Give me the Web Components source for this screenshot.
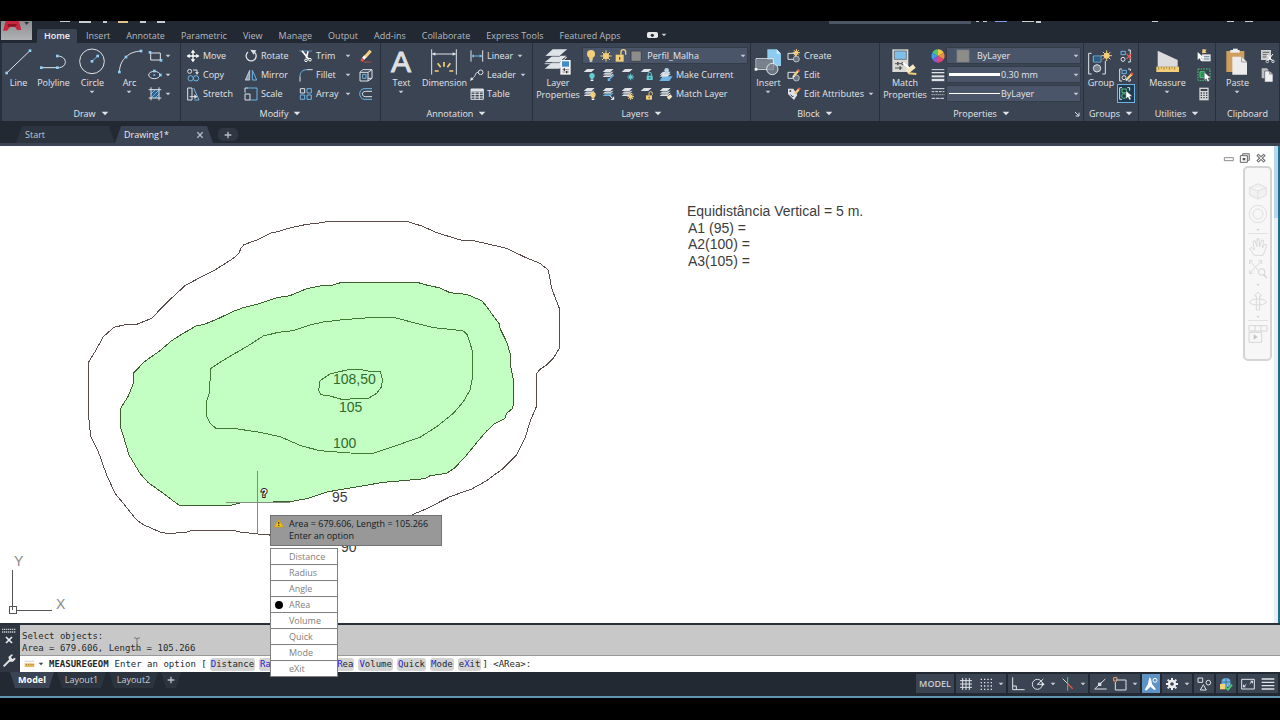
<!DOCTYPE html>
<html lang="en">
<head>
<meta charset="utf-8">
<title>Drawing1</title>
<style>
  html, body { margin: 0; height: 100%; background: #000; }
  body { font-family: "Open Sans", "Noto Sans", sans-serif; font-size: 9px; line-height: 12px; color: #e2e5e9; overflow: hidden; }
</style>
</head>
<body>
<cad-app></cad-app>
<script>
const W = '#dfe3e8', B = '#6db7e6', Y = '#f3cf7a', T = '#62cdd2', R = '#e2574c', G = '#4fc777';

/* Icon markup: three drawing units per pixel. [x, y, width, height, markup] */
const sq = (x, y) => `<path d="M${x - 4} ${y - 4}h8v8h-8z" fill="#8fd0f5"/>`;
const ln = (d, c = W, w = 3) => `<path d="${d}" fill="none" stroke="${c}" stroke-width="${w}"/>`;
const fl = (d, c = W) => `<path d="${d}" fill="${c}"/>`;
const sheet = (y, c = W) => fl(`M15 ${y}H38L28 ${y + 9}H5z`, c);
const stack = (c = W) => sheet(21, c) + sheet(14, W) + ln('M4 15L15 5H38', '#3b4453', 1) + sheet(6, W) + ln('M6 17H29L38 9M6 24H29L38 16', '#3b4453', 2);
const bulb = (x, y, c) => `<circle cx="${x}" cy="${y}" r="8" fill="${c}"/>` + fl(`M${x - 4} ${y + 7}h8v4h-8z`, c) + fl(`M${x - 4} ${y + 12}h8v4h-8z`, '#fff');
const star = (x, y, r, c = Y) => ln(`M${x - r} ${y}h${2 * r}M${x} ${y - r}v${2 * r}M${x - r * .7} ${y - r * .7}l${r * 1.4} ${r * 1.4}M${x + r * .7} ${y - r * .7}l${-r * 1.4} ${r * 1.4}`, c) + `<circle cx="${x}" cy="${y}" r="${r * .55}" fill="${c}"/>`;
const lock = (x, y, c, open) => fl(`M${x - 9} ${y}h18v13h-18z`, c) + ln(open ? `M${x} ${y}v-6a5 5 0 0 1 10 0v4` : `M${x - 5} ${y}v-5a5 5 0 0 1 10 0v5`, c) + fl(`M${x - 1} ${y + 4}h3v5h-3z`, '#3b4453');
const pencil = (x, y) => ln(`M${x} ${y}l14 -16`, Y, 7) + ln(`M${x + 12} ${y - 13}l4 -5`, R, 7) + fl(`M${x - 5} ${y + 6}l2 -8 6 5z`, '#fff');
const pointer = (x, y) => `<path d="M${x} ${y}v24l6-5 4 9 5-2-4-9h8z" fill="#fff" stroke="#26303a" stroke-width="1"/>`;
const tag = ln('M6 16H28V34H6z') + '<circle cx="31" cy="33" r="9" fill="#6a7480" stroke="#dfe3e8" stroke-width="2"/>';

const ICONS = {
  line: [12, 144, 84, 84, ln('M20 219L90 152') + sq(20, 219) + sq(90, 152)],
  polyline: [117, 144, 84, 84, ln('M124 203H178C204 200 202 168 172 168') + sq(124, 203) + sq(172, 203) + sq(172, 168)],
  circle: [235, 144, 84, 84, `<circle cx="277" cy="184" r="37" fill="none" stroke="${W}" stroke-width="3"/>` + ln('M277 184L294 168', B) + sq(277, 184) + sq(294, 168)],
  arc: [346, 144, 84, 84, ln('M359 216C360 195 368 180 379 171C392 158 405 155 424 153') + sq(359, 216) + sq(379, 171) + sq(424, 153)],
  rect: [444, 144, 48, 48, ln('M455 159H484V180H455z') + sq(453, 157) + sq(486, 181)],
  ellipse: [444, 202, 48, 48, `<ellipse cx="466" cy="226" rx="17" ry="11" fill="none" stroke="${W}" stroke-width="3"/><circle cx="466" cy="226" r="3" fill="${B}"/>` + sq(484, 226) + sq(466, 214)],
  hatch: [444, 260, 48, 48, fl('M456 272H480V296H456z', '#2d5f86') + ln('M456 284L468 272M456 296L480 272M468 296L480 284', B) + ln('M456 264V303M480 264V303M449 271H487M449 296H487')],
  move: [0, 0, 48, 48, ln('M24 8V40M8 24H40', '#fff', 4) + fl('M24 5l7 9H17zM24 43l7-9H17zM5 24l9-7v14zM43 24l-9-7v14z', '#fff')],
  copy: [0, 0, 48, 48, `<g fill="none" stroke-width="3"><circle cx="14" cy="13" r="6" stroke="${W}"/><g stroke="${B}"><circle cx="17" cy="34" r="8"/><circle cx="33" cy="34" r="8"/></g></g>` + ln('M24 9H36V18') + fl('M30 16h12l-6 7z')],
  stretch: [0, 0, 48, 48, ln('M8 6H21V42H8z') + ln('M26 6L42 42H28', B) + ln('M14 32H30') + fl('M28 25l9 7-9 7z')],
  rotate: [0, 0, 48, 48, ln('M15 12A15 15 0 1 0 36 14', W, 4) + fl('M22 5L40 7L32 20z')],
  mirror: [0, 0, 48, 48, fl('M20 8V40H6z', '#8fa0ae') + ln('M20 10V39H7z', W, 2) + ln('M28 10V39H41z', B)],
  scale: [0, 0, 48, 48, ln('M12 6H42V42H22', B) + ln('M6 24H21V42H6zM6 20V6H14')],
  trim: [0, 0, 48, 48, ln('M4 9H42', B, 2) + ln('M12 8L32 34M30 10L25 30', '#fff', 5) + '<circle cx="24" cy="37" r="4" fill="none" stroke="#fff" stroke-width="3"/><circle cx="36" cy="35" r="4" fill="none" stroke="#fff" stroke-width="3"/>'],
  fillet: [0, 0, 48, 48, ln('M26 8H44M6 28V44') + ln('M6 28C6 16 14 8 26 8', B)],
  array: [0, 0, 48, 48, ln('M7 8H20V21H7z') + ln('M27 8H40V21H27zM7 27H20V40H7zM27 27H40V40H27z', B)],
  erase: [0, 0, 48, 48, ln('M22 26L38 8', Y, 9) + ln('M15 33L22 25', '#fff', 9) + ln('M10 39L16 32', R, 9) + ln('M18 42H40', R, 2)],
  explode: [0, 0, 48, 48, ln('M6 16H30V42H6zM14 8H42V34H30M6 16L14 8M30 16L42 8M30 42L42 34') + ln('M14 22H24V34H14z', B)],
  offset: [0, 0, 48, 48, ln('M42 8H18C0 10 2 38 18 40H42', B) + ln('M42 16H22C10 17 10 31 22 32H42')],
  dimension: [355, 144, 84, 84, ln('M360 148V224M434 148V224M362 162H432') + fl('M361 162l10-5v10zM433 162l-10-5v10z') + ln('M397 186V200M378 190L387 202M416 190L407 202M369 213H381M413 213H425', Y, 5)],
  linear: [0, 0, 48, 48, ln('M6 7V41M41 7V41') + ln('M8 24H39', B) + fl('M7 24l8-5v10zM40 24l-8-5v10z', B)],
  leader: [0, 0, 48, 48, '<circle cx="35" cy="16" r="7" fill="none" stroke="#dfe3e8" stroke-width="3"/>' + ln('M28 16C16 16 24 26 8 36') + fl('M3 42l3-11 8 6z')],
  table: [0, 0, 48, 48, ln('M6 9H43V40H6zM6 18H43M6 25H43M6 33H43M18 18V40M31 18V40') + fl('M6 9H43V16H6z')],
  layerprops: [702, 144, 84, 84, fl('M728 186H770L748 206H704z') + ln('M728 172H770L748 191H704') + fl('M728 167H770L748 187H704z') + ln('M704 188H748L770 168', '#3b4453', 2) + fl('M728 148H772L749 168H706z') + ln('M705 169H749L772 149', '#3b4453', 2) + fl('M751 180H782V224H751z', '#f2f2f2') + fl('M756 184H777V200H756z', '#3f8cc9') + ln('M757 209H777M757 216H777', '#555', 2) + fl('M761 205h4v7h-4zM768 213h4v7h-4z', '#333')],
  lyoff: [0, 0, 48, 48, sheet(6) + bulb(30, 26, T)],
  lyiso: [0, 0, 48, 48, stack() + ln('M22 40L38 24M22 34V40H28', B, 4)],
  lyfrz: [0, 0, 48, 48, sheet(6) + star(32, 30, 10, T)],
  lylock: [0, 0, 48, 48, sheet(6) + lock(32, 26, T)],
  lycur: [0, 0, 48, 48, fl('M14 28H44L34 42H4z', B) + sheet(20) + sheet(14) + '<circle cx="26" cy="10" r="7" fill="#b9d7e8"/>' + fl('M16 22L26 14L38 22z', '#b9d7e8')],
  lyon: [0, 0, 48, 48, stack() + bulb(33, 26, Y)],
  lyuniso: [0, 0, 48, 48, stack(B) + ln('M26 28L38 40M38 32V40H30', '#fff', 3)],
  lythaw: [0, 0, 48, 48, stack() + star(32, 32, 10)],
  lyunlock: [0, 0, 48, 48, sheet(6) + lock(30, 28, Y, 1)],
  lymatch: [0, 0, 48, 48, stack() + ln('M24 26L32 32', W, 4) + ln('M30 38L40 28', '#f5e7b8', 9)],
  bulb: [0, 0, 48, 48, bulb(24, 18, Y).replace('r="8"', 'r="12"') + fl('M19 28h10v8h-10z', Y) + fl('M20 37h8v4h-8z', '#fff')],
  sun: [0, 0, 48, 48, star(24, 24, 17)],
  unlock: [0, 0, 48, 48, fl('M8 20H32V41H8z', Y) + ln('M24 20V12a7 7 0 0 1 14 0v8', Y, 4) + fl('M18 27h4v8h-4z', '#6b5a28')],
  swatch: [0, 0, 48, 48, fl('M9 9H40V40H9z', '#8c8c88') + ln('M9 9H40V40H9z', '#2c333d', 2)],
  bigswatch: [0, 0, 48, 48, fl('M5 5H43V43H5z', '#8c8c88') + ln('M5 5H43V43H5z', '#5f6672', 2)],
  insert: [402, 138, 84, 84, fl('M442 142H470L483 155V192H442z', '#8ecbf0') + fl('M470 142V155H483z', '#d7edfb') + ln('M408 170H460V202H408z') + fl('M410 172H458V200H410z', '#78818c') + '<circle cx="457" cy="201" r="17" fill="#7d8792" fill-opacity=".75" stroke="#dfe3e8" stroke-width="3"/>' + fl('M404 198h8v8h-8z', '#fff')],
  create: [0, 0, 48, 48, tag + star(31, 14, 11)],
  edit: [0, 0, 48, 48, tag + pencil(24, 26)],
  editattr: [0, 0, 48, 48, fl('M6 8H22L34 26L24 42L6 24z', W) + '<circle cx="13" cy="15" r="3" fill="#3b4453"/>' + ln('M14 26l6 7 8-12', '#3b4453', 3) + pencil(26, 24)],
  matchprops: [816, 144, 84, 84, fl('M820 148H868V216H820z', '#d9d9d6') + fl('M826 153H862V178H826z', '#7fc0ea') + ln('M826 153H862V178H826z', '#555', 2) + ln('M828 191H858M828 204H850', '#555', 3) + fl('M834 186h5v10h-5zM848 186h5v10h-5zM841 199h5v10h-5z', '#555') + ln('M852 188L872 206', '#fff', 6) + ln('M864 216L886 198', '#f5e9c0', 13) + ln('M868 220L892 222', Y, 6)],
  wheel: [0, 0, 48, 48, fl('M24 24V4A20 20 0 0 1 41 14z', '#f4c542') + fl('M24 24L41 14A20 20 0 0 1 41 34z', '#f58b3c') + fl('M24 24L41 34A20 20 0 0 1 24 44z', '#e2476d') + fl('M24 24V44A20 20 0 0 1 7 34z', '#8c56d9') + fl('M24 24L7 34A20 20 0 0 1 7 14z', '#3f9be6') + fl('M24 24L7 14A20 20 0 0 1 24 4z', '#4fc777')],
  lweight: [0, 0, 48, 48, ln('M5 8H43') + ln('M5 17H43', W, 4) + ln('M5 28H43', W, 6) + ln('M5 39H43', W, 7)],
  ltype: [0, 0, 48, 48, ln('M5 8H43') + '<g stroke-dasharray="8 3">' + ln('M5 17H43') + '</g><g stroke-dasharray="3 3">' + ln('M5 26H43') + '</g><g stroke-dasharray="11 2">' + ln('M5 37H43') + '</g>'],
  launcher: [0, 0, 24, 24, ln('M6 6L17 17M18 8V18H8', W, 3)],
  group: [438, 144, 84, 84, ln('M452 160H443V222H452M484 222H493V182') + ln('M457 168H480V186H457z', B) + fl('M459 170H478V184H459z', '#2d5f86') + '<circle cx="468" cy="205" r="11" fill="#78818c" stroke="#dfe3e8" stroke-width="3"/>' + star(497, 167, 16)],
  ungroup: [0, 0, 48, 48, ln('M9 10H22V20H9z', B) + '<circle cx="15" cy="34" r="6" fill="none" stroke="#dfe3e8" stroke-width="3"/>' + ln('M30 6H37V42H30') + ln('M26 18l14 14M40 18L26 32', R, 4)],
  groupedit: [0, 0, 48, 48, ln('M12 6H5V42H12M30 42H37V36M30 6H37V12') + ln('M12 10H25V20H12z', B) + '<circle cx="18" cy="32" r="6" fill="none" stroke="#dfe3e8" stroke-width="3"/>' + pencil(28, 36)],
  groupsel: [0, 0, 48, 48, ln('M12 5H5V40H12M28 5H35V14') + ln('M12 9H25V20H12z', G) + '<circle cx="18" cy="30" r="7" fill="none" stroke="#4fc777" stroke-width="3"/>' + pointer(24, 14)],
  measure: [638, 144, 84, 84, fl('M652 152L712 180V200H652z', '#dcdcdc') + fl('M648 200H716V216H648z', Y) + ln('M655 201v8M663 201v5M671 201v8M679 201v5M687 201v8M695 201v5M703 201v8', '#7a5f1c', 2)],
  qselect: [0, 0, 48, 48, fl('M18 19H44V40H18z', '#e5e5e5') + ln('M24 26H40M24 33H40', '#6783a0', 3) + fl('M20 3l12 2-4 5 4 4-14 2z', Y) + pointer(5, 12).replace('stroke-width="1"', 'stroke-width="0"')],
  selall: [0, 0, 48, 48, '<g stroke-dasharray="5 3">' + ln('M6 6H42V40H6z', G) + '</g>' + fl('M12 14H26V32H12z', '#2f8d55') + ln('M12 14H26V32H12z', G) + pointer(25, 16)],
  calc: [0, 0, 48, 48, fl('M10 5H38V43H10z', '#d6d6d6') + fl('M14 9H34V15H14z', '#3b4453') + '<g stroke-dasharray="4 4">' + ln('M14 21H34M14 28H34M14 35H34', '#3b4453', 4) + '</g>'],
  paste: [852, 144, 84, 84, fl('M862 153H916V216H862z', '#cf9f5d') + fl('M874 150H902V158H874z', '#eee') + fl('M882 146H896V152H882z', '#eee') + fl('M880 170H908L924 186V224H880z', '#ececec') + ln('M908 170V186H924', '#777', 2)],
  cut: [0, 0, 48, 48, fl('M6 6H36V36H6z', '#cfcfcf') + ln('M11 13H31M11 20H26M11 27H22', '#59616c') + ln('M24 20L42 40M42 18L26 38', '#fff', 3) + '<circle cx="25" cy="40" r="4" fill="none" stroke="#fff" stroke-width="2"/><circle cx="42" cy="40" r="4" fill="none" stroke="#fff" stroke-width="2"/>'],
  copyclip: [0, 0, 48, 48, fl('M8 4H24L28 8V34H8z', '#bfbfbf') + fl('M17 12H32L41 21V44H17z', '#f0f0f0') + ln('M17 44V12H32L41 21M32 12V21H41', '#4a525e', 2)],
  grid: [0, 0, 48, 48, ln('M14 6V42M24 6V42M34 6V42M6 14H42M6 24H42M6 34H42')],
  snap: [0, 0, 48, 48, '<g stroke-dasharray="4 6">' + ln('M8 10H42M8 20H42M8 30H42M8 40H42', W, 4) + '</g>'],
  ortho: [0, 0, 48, 48, ln('M8 4V41H44M8 30H19V41', W, 3)],
  polar: [0, 0, 48, 48, '<circle cx="22" cy="25" r="15" fill="none" stroke="#dfe3e8" stroke-width="3"/>' + ln('M22 25L40 9M22 25H42') + fl('M36 18l8 7-8 6z')],
  iso: [0, 0, 48, 48, ln('M23 3V44', G) + ln('M8 8L22 22', '#cfd4d9') + ln('M24 24L38 38', R, 4)],
  otrack: [0, 0, 48, 48, ln('M40 9L8 39H44', W, 3) + fl('M18 20h10v10H18z', '#d8dce0')],
  osnap: [0, 0, 48, 48, ln('M12 12H42V42H10V18', W, 3) + ln('M5 5H15V15H5z', '#f0a878', 3)],
  annovis: [0, 0, 48, 48, fl('M19 4L24 8L27 24L39 40L34 42L22 32L10 44L5 41L15 24z', '#fff') + '<circle cx="36" cy="13" r="6" fill="none" stroke="#fff" stroke-width="3"/>'],
  gear: [0, 0, 48, 48, '<circle cx="24" cy="24" r="9" fill="none" stroke="#f0f0f0" stroke-width="7"/>' + ln('M24 6V12M24 36V42M6 24H12M36 24H42M11 11L16 16M32 32L37 37M37 11L32 16M16 32L11 37', '#f0f0f0', 6)],
  units: [0, 0, 48, 48, ln('M6 6H20V19H6zM22 26L31 42H13z') + '<circle cx="37" cy="20" r="7" fill="none" stroke="#dfe3e8" stroke-width="3"/>'],
  perf: [0, 0, 48, 48, '<circle cx="24" cy="20" r="14" fill="#6db7e6"/>' + ln('M10 18H40M24 6V34', '#28516f', 2) + fl('M6 24H22V40H6z', Y) + ln('M22 34L30 41L42 26', G, 6)],
  clean: [0, 0, 48, 48, ln('M5 10H43V39H5z') + fl('M30 14h9v9zM18 34H9v-9z') + ln('M29 23L35 18M19 25L13 30')],
  custom: [0, 0, 48, 48, ln('M5 9H43M5 19H43M5 29H43M5 39H43', W, 4)],
  logo: [6, 63, 93, 60, fl('M12 92L20 63H60L67 90H54L48 80H34L24 92z', '#c8283f') + fl('M26 72H54L50 80H26z', '#8d1526') + fl('M76 66H90L83 75z', '#333')],
  camera: [84, 96, 33, 21, '<rect x="84" y="96" width="33" height="18" rx="5" fill="#e8e8e8"/><circle cx="100" cy="106" r="5" fill="#2a313b"/>'],
  ruler: [72, 360, 33, 24, fl('M74 370H103V381H74z', '#e8bb63') + ln('M79 372v4M86 372v4M93 372v4M99 372v4', '#8b6a21', 2) + ln('M74 364H103', '#b9b9b9', 2)],
  wrench: [0, 0, 48, 48, ln('M8 40L28 20', '#e5e5e5', 6) + fl('M22 12L32 4L36 6L30 12L34 18L42 14L44 18L36 26L26 26z', '#e5e5e5')],
  grip: [0, 0, 48, 24, '<g stroke-dasharray="4 2">' + ln('M3 7H45M3 15H45', '#c5c9ce', 4) + '</g>'],
  cross: [0, 0, 30, 30, ln('M6 6L24 24M24 6L6 24', '#eceff2', 5)],
  tabx: [0, 0, 24, 24, ln('M4 4L20 20M20 4L4 20', '#b4bac2', 4)],
  plus: [0, 0, 30, 30, ln('M15 5V25M5 15H25', '#b9bec5', 4)],
  warn: [40, 954, 33, 33, '<path d="M54 958L68 981H41z" fill="#f2bf1b" stroke="#c99a0a" stroke-width="2"/>' + fl('M52 965h4v8h-4zM52 975h4v3h-4z', '#5d4a08')],
  down: [0, 0, 18, 12, fl('M2 2H16L9 10z', '#c9ced4')],
  downdark: [0, 0, 18, 12, fl('M2 2H16L9 10z', '#444')],
  downpale: [0, 0, 18, 12, fl('M4 3H14L9 9z', '#d2d2d2')],
  tri: [0, 0, 24, 15, fl('M2 2H22L12 13z', '#dfe3e8')],
  nvcube: [0, 0, 66, 66, '<path d="M33 8L58 20V42L33 54L8 42V20zM8 20L33 30L58 20M33 30V54" fill="#f1f1f1" stroke="#dfdfdf" stroke-width="3"/>'],
  nvwheel: [0, 0, 66, 66, '<g fill="none" stroke="#e0e0e0" stroke-width="3"><circle cx="33" cy="33" r="26"/><circle cx="33" cy="33" r="15"/></g>'],
  nvpan: [0, 0, 66, 66, ln('M22 58L8 38L14 34L22 42L18 16L24 14L30 32L30 8H36L38 32L44 12L50 14L46 36L54 24L60 28L48 58z', '#dadada', 3)],
  nvzoom: [0, 0, 66, 66, ln('M8 8L40 44M44 8L8 46M8 18V8H18M34 8H44V18M8 36V46H18', '#dadada', 3) + '<circle cx="44" cy="42" r="10" fill="#f6f6f6" stroke="#d4d4d4" stroke-width="3"/>' + ln('M50 50L60 60', '#d4d4d4', 4)],
  nvorbit: [0, 0, 66, 66, '<ellipse cx="33" cy="36" rx="25" ry="9" fill="none" stroke="#dadada" stroke-width="3"/>' + ln('M28 60V18H22L33 6L44 18H38V60z', '#dadada', 3)],
  nvmotion: [0, 0, 66, 66, ln('M6 8H60V24H6zM24 8V24M42 8V24M6 28H44V58H6z', '#d6d6d6', 3) + fl('M20 34l12 8-12 8z', '#c4c4c4')],
  winmin: [0, 0, 36, 36, '<path d="M4 17H31V26H4z" fill="#fff" stroke="#8d8d8d" stroke-width="3"/>'],
  winmax: [0, 0, 36, 36, '<path d="M11 5H31V25H11z" fill="#ddd" stroke="#777" stroke-width="3"/><path d="M4 11H25V31H4z" fill="#fff" stroke="#666" stroke-width="3"/><path d="M11 18H19V25H11z" fill="#555"/>'],
  winclose: [0, 0, 36, 36, ln('M7 8L29 29M29 8L7 29', '#777', 9) + ln('M9 10L27 27M27 10L9 27', '#fff', 3)]
};

const define = (name, html) => customElements.define(name, class extends HTMLElement {
  constructor() {
    super();
    this.attachShadow({ mode: 'open' });
    if (typeof html === 'string') {
      const t = document.createElement('template');
      t.innerHTML = html;
      this.shadowRoot.append(t.content.cloneNode(true));
    }
  }
  connectedCallback() {
    if (typeof html === 'function' && !this.shadowRoot.firstChild) this.shadowRoot.innerHTML = html(this);
  }
});

const RESET = `
  button, select, input { font: inherit; color: inherit; background: none; border: 0; padding: 0; margin: 0; border-radius: 0; }
  button { cursor: pointer; white-space: nowrap; }
  a { color: inherit; text-decoration: none; }
`;

define('cad-icon', el => {
  const [x, y, w, h, markup] = ICONS[el.getAttribute('name')];
  return `<style>:host { display: block; flex: none; white-space: normal; } svg { display: block; }</style>
    <svg width="${w / 3}" height="${h / 3}" viewBox="${x} ${y} ${w} ${h}" aria-hidden="true">${markup}</svg>`;
});

/* Large ribbon button: icon on top, caption below. */
define('big-tool', `<style>${RESET}
  :host { display: block; }
  button { display: flex; flex-direction: column; align-items: center; width: 100%; padding-top: 5px; text-align: center; }
  .icon { height: 28px; }
  .label { padding: 1px 0 1px 1px; white-space: pre-line; }
</style>
<button type="button"><span class="icon"><slot name="icon"></slot></span><span class="label"><slot></slot></span><slot name="arrow"></slot></button>`);

/* Small ribbon button: icon, optional caption, optional drop-down arrow. */
define('small-tool', el => `<style>${RESET}
  :host { display: block; height: 19px; }
  button { display: flex; align-items: center; gap: 2px; height: 19px; }
  .text { display: block; min-width: var(--label-width, 0); text-align: left; }
  cad-icon.arrow { margin-left: ${el.hasAttribute('icon-only') ? 0 : 2}px; }
  :host([active]) button { background: #1f3a50; box-shadow: inset 0 0 0 1px #6fb2df; margin-left: -1px; padding: 0 1px; }
</style>
<button type="button" aria-label="${el.getAttribute('label') || el.textContent}"><cad-icon name="${el.getAttribute('icon')}"></cad-icon>${el.hasAttribute('icon-only') ? '' : '<span class="text"><slot></slot></span>'}${el.hasAttribute('menu') ? '<cad-icon class="arrow" name="down"></cad-icon>' : ''}</button>`);

/* Drop-down field with a slot in front for swatches and previews. */
define('cad-combo', el => `<style>${RESET}
  :host { display: flex; align-items: center; box-sizing: border-box; height: 17px; margin: 1px 0; background: #4a556a; border: 1px solid #333c49; padding-right: 1px; min-width: 0; }
  select { flex: 1; min-width: 0; appearance: none; height: 15px; line-height: 15px; outline: 0; }
  cad-icon { pointer-events: none; }
</style>
<slot></slot><select aria-label="${el.getAttribute('label')}"><option>${el.getAttribute('value')}</option></select><cad-icon name="down"></cad-icon>`);

define('ribbon-panel', el => `<style>
  :host { display: flex; flex-direction: column; min-width: 0; box-sizing: border-box; background: #3b4453; border-right: 1px solid #28303b; flex: var(--w) 1 0; }
  .tools { display: grid; grid-template-columns: var(--cols); height: 62px; padding-left: var(--pad, 0); }
  .title { display: flex; align-items: center; justify-content: center; gap: 5px; height: 16px; padding-top: 1px; box-sizing: border-box; position: relative; }
  .launcher { position: absolute; right: 2px; bottom: 3px; }
</style>
<div class="tools"><slot></slot></div>
<div class="title"><span>${el.getAttribute('heading')}</span>${el.hasAttribute('plain') ? '' : '<cad-icon name="tri"></cad-icon>'}${el.hasAttribute('launcher') ? '<cad-icon class="launcher" name="launcher"></cad-icon>' : ''}</div>`);

const big = (icon, label, menu) => `<big-tool><cad-icon slot="icon" name="${icon}"></cad-icon>${label}${menu ? '<cad-icon slot="arrow" name="down"></cad-icon>' : ''}</big-tool>`;
const small = (icon, label, menu) => `<small-tool icon="${icon}"${menu ? ' menu' : ''}>${label}</small-tool>`;
const only = (icon, label, extra = '') => `<small-tool icon="${icon}" label="${label}" icon-only ${extra}></small-tool>`;

define('cad-ribbon', `<style>
  :host { display: flex; padding-left: 2px; background: #28303b; height: 78px; }
  .col { display: block; padding: 3px 0 0 var(--inset, 0); min-width: 0; }
  .wide { --label-width: 25px; }
  .inset { --inset: 1px; }
  .glyph { display: block; width: 28px; height: 28px; overflow: visible; }
  .layers { display: grid; grid-template-columns: repeat(4, 19px) 1fr; align-content: start; padding: 3px 2px 0 0; }
  .layers cad-combo { grid-column: 1 / -1; }
  .props { display: grid; grid-template-columns: 17px minmax(0, 1fr); align-content: start; padding: 3px 2px 0 0; }
  .props > cad-icon { align-self: center; justify-self: center; }
  .stroke { width: 51px; margin: 0 1px 0 2px; background: #fff; height: 3px; flex: none; }
  .stroke.thin { height: 1px; }
  .bulbs { display: flex; margin-right: 2px; }
  .bulbs cad-icon { margin-right: -1px; }
  .color { margin: 0 6px 0 8px; }
</style>
<ribbon-panel heading="Draw" style="--w:178;--cols:32px 38px 40px 34px 1fr">
  ${big('line', 'Line')}${big('polyline', 'Polyline')}${big('circle', 'Circle', 1)}${big('arc', 'Arc', 1)}
  <div class="col inset">${only('rect', 'Rectangle', 'menu')}${only('ellipse', 'Ellipse', 'menu')}${only('hatch', 'Hatch', 'menu')}</div>
</ribbon-panel>
<ribbon-panel heading="Modify" style="--w:199;--cols:58px 55px 60px 1fr;--pad:4px">
  <div class="col">${small('move', 'Move')}${small('copy', 'Copy')}${small('stretch', 'Stretch')}</div>
  <div class="col">${small('rotate', 'Rotate')}${small('mirror', 'Mirror')}${small('scale', 'Scale')}</div>
  <div class="col wide">${small('trim', 'Trim', 1)}${small('fillet', 'Fillet', 1)}${small('array', 'Array', 1)}</div>
  <div class="col">${only('erase', 'Erase')}${only('explode', 'Explode')}${only('offset', 'Offset')}</div>
</ribbon-panel>
<ribbon-panel heading="Annotation" style="--w:151;--cols:38px 48px 1fr;--pad:1px">
  <big-tool><svg slot="icon" class="glyph" viewBox="0 0 28 28" aria-hidden="true"><text x="14" y="24" text-anchor="middle" font-family="Liberation Sans" font-size="30" fill="#dcdfe3" stroke="#dcdfe3">A</text></svg>Text<cad-icon slot="arrow" name="down"></cad-icon></big-tool>
  ${big('dimension', 'Dimension')}
  <div class="col inset">${small('linear', 'Linear', 1)}${small('leader', 'Leader', 1)}${small('table', 'Table')}</div>
</ribbon-panel>
<ribbon-panel heading="Layers" style="--w:217;--cols:49px minmax(0,1fr)">
  ${big('layerprops', 'Layer\nProperties')}
  <div class="layers">
    <cad-combo label="Layer" value="Perfil_Malha"><span class="bulbs"><cad-icon name="bulb"></cad-icon><cad-icon name="sun"></cad-icon><cad-icon name="unlock"></cad-icon><cad-icon name="swatch"></cad-icon></span>&nbsp;</cad-combo>
    ${only('lyoff', 'Layer off')}${only('lyiso', 'Isolate')}${only('lyfrz', 'Freeze')}${only('lylock', 'Lock')}${small('lycur', 'Make Current')}
    ${only('lyon', 'Turn all on')}${only('lyuniso', 'Unisolate')}${only('lythaw', 'Thaw all')}${only('lyunlock', 'Unlock')}${small('lymatch', 'Match Layer')}
  </div>
</ribbon-panel>
<ribbon-panel heading="Block" style="--w:128;--cols:34px 1fr">
  ${big('insert', 'Insert', 1)}
  <div class="col inset">${small('create', 'Create')}${small('edit', 'Edit')}${small('editattr', 'Edit Attributes', 1)}</div>
</ribbon-panel>
<ribbon-panel heading="Properties" launcher style="--w:203;--cols:49px minmax(0,1fr)">
  ${big('matchprops', 'Match\nProperties')}
  <div class="props">
    <cad-icon name="wheel"></cad-icon><cad-combo label="Object colour" value="ByLayer"><cad-icon class="color" name="bigswatch"></cad-icon></cad-combo>
    <cad-icon name="lweight"></cad-icon><cad-combo label="Lineweight" value="0.30 mm"><span class="stroke"></span></cad-combo>
    <cad-icon name="ltype"></cad-icon><cad-combo label="Linetype" value="ByLayer"><span class="stroke thin"></span></cad-combo>
  </div>
</ribbon-panel>
<ribbon-panel heading="Groups" style="--w:54;--cols:33px 1fr">
  ${big('group', 'Group')}
  <div class="col inset">${only('ungroup', 'Ungroup')}${only('groupedit', 'Group edit')}${only('groupsel', 'Group selection', 'active')}</div>
</ribbon-panel>
<ribbon-panel heading="Utilities" style="--w:76;--cols:56px 1fr">
  ${big('measure', 'Measure', 1)}
  <div class="col inset">${only('qselect', 'Quick select')}${only('selall', 'Select all')}${only('calc', 'Calculator')}</div>
</ribbon-panel>
<ribbon-panel heading="Clipboard" plain style="--w:63;--cols:42px 1fr">
  ${big('paste', 'Paste', 1)}
  <div class="col inset">${only('cut', 'Cut')}${only('copyclip', 'Copy clip')}</div>
</ribbon-panel>`);

/* Title strip and ribbon tabs. */
define('cad-header', `<style>${RESET}
  :host { display: block; height: 22px; background: #222932; position: relative; color: #b4bac2; }
  nav { display: flex; align-items: flex-end; height: 22px; padding-left: 37px; }
  nav a { padding: 0 7px; height: 14px; line-height: 13px; margin-right: 2px; }
  nav a[aria-current] { background: #3b4453; color: #f0f2f4; font-weight: 600; border-radius: 2px 2px 0 0; }
  nav button { display: flex; align-items: center; gap: 3px; height: 16px; margin-left: 18px; }
  .app { position: absolute; left: 1px; top: 0; width: 31px; height: 19px; overflow: hidden; background: linear-gradient(#8b8d90, #b1b2b4); }
  .quick { position: absolute; left: 0; top: 0; width: 100%; height: 4px; }
</style>
<svg class="quick" aria-hidden="true"><g fill="#c9cdd2"><path d="M60 0h10v1H60zM79 0h12v2H79zM103 0h4v2h-4zM140 0h6v2h-6zM157 0h8v2h-8z"/><path d="M118 0h10v2h-10z" fill="#dcc58a"/><path d="M829 0h142v3H829z" fill="#4b5565"/><path d="M976 0h3v1h-3zM983 0h4v1h-4zM1022 0h12v1h-12zM1036 0h5v2h-5zM1152 0h6v1h-6zM1227 0h7v1h-7zM1245 0h8v1h-8z"/><path d="M995 0h12v1h-12z" fill="#7e9fe0"/></g></svg>
<nav aria-label="Ribbon tabs">
  <a href="#" aria-current="page">Home</a><a href="#">Insert</a><a href="#">Annotate</a><a href="#">Parametric</a><a href="#">View</a><a href="#">Manage</a><a href="#">Output</a><a href="#">Add-ins</a><a href="#">Collaborate</a><a href="#">Express Tools</a><a href="#">Featured Apps</a>
  <button type="button" aria-label="Ribbon display"><cad-icon name="camera"></cad-icon><cad-icon name="down"></cad-icon></button>
</nav>
<button class="app" type="button" aria-label="Application menu"><cad-icon name="logo"></cad-icon></button>`);

define('file-tabs', `<style>${RESET}
  :host { display: flex; align-items: flex-end; height: 25px; box-sizing: border-box; padding: 0 0 3px 16px; background: #222932; box-shadow: inset 0 -3px #3b4453, inset 0 -1px #6a717c; color: #c3c8ce; }
  div { display: flex; align-items: center; height: 17px; clip-path: polygon(6px 0, calc(100% - 6px) 0, 100% 100%, 0 100%); background: #2c343f; box-sizing: border-box; padding: 0 9px; }
  .start { width: 99px; }
  .active { width: 98px; background: #3b4453; color: #eceff2; justify-content: space-between; }
  .add { background: #2f3743; width: 20px; padding: 0 5px; margin: 0 0 2px 5px; height: 13px; border-radius: 5px; clip-path: none; }
</style>
<div class="start"><a href="#">Start</a></div>
<div class="active"><a href="#">Drawing1*</a><button type="button" aria-label="Close Drawing1"><cad-icon name="tabx"></cad-icon></button></div>
<div class="add"><button type="button" aria-label="New drawing"><cad-icon name="plus"></cad-icon></button></div>`);

/* Navigation bar on the right side of the drawing. */
define('nav-bar', `<style>${RESET}
  :host { display: flex; flex-direction: column; align-items: center; box-sizing: border-box; width: 29px; height: 195px; padding-top: 13px; background: #f7f7f7; border: 2px solid #d4d4d4; border-radius: 5px; }
  button { height: 22px; }
  hr { width: 20px; margin: 1px 0 2px; border: 0; border-top: 1px solid #e2e2e2; }
  cad-icon[name=downpale] { margin-top: 3px; }
  .gap { height: 10px; }
</style>
<button type="button" aria-label="View cube"><cad-icon name="nvcube"></cad-icon></button>
<button type="button" aria-label="Steering wheel"><cad-icon name="nvwheel"></cad-icon></button>
<cad-icon name="downpale"></cad-icon><hr>
<button type="button" aria-label="Pan"><cad-icon name="nvpan"></cad-icon></button>
<button type="button" aria-label="Zoom extents"><cad-icon name="nvzoom"></cad-icon></button>
<span class="gap"><cad-icon name="downpale"></cad-icon></span>
<button type="button" aria-label="Orbit"><cad-icon name="nvorbit"></cad-icon></button>
<cad-icon name="downpale"></cad-icon><hr>
<button type="button" aria-label="Show motion"><cad-icon name="nvmotion"></cad-icon></button>`);

/* Dynamic input: message box and option list next to the cursor. */
define('dynamic-input', `<style>${RESET}
  :host { display: block; width: 172px; }
  .message { display: flex; gap: 4px; box-sizing: border-box; height: 31px; padding: 2px 3px 0; background: #989898; border: 1px solid #727272; color: #141a1f; }
  .message p { margin: 0; white-space: nowrap; }
  ul { list-style: none; margin: 2px 0 0; padding: 0; width: 68px; box-sizing: border-box; border: 1px solid #808080; background: #fff; color: #808080; }
  li + li { border-top: 1px solid #808080; }
  li button { display: flex; align-items: center; width: 100%; height: 15px; padding-left: 4px; }
  li button::before { content: ""; width: 8px; height: 8px; margin-right: 6px; border-radius: 50%; }
  li button[aria-checked=true]::before { background: #000; }
</style>
<div class="message" role="status"><cad-icon name="warn"></cad-icon><p>Area = 679.606, Length = 105.266<br>Enter an option</p></div>
<ul role="menu">${['Distance', 'Radius', 'Angle', 'ARea', 'Volume', 'Quick', 'Mode', 'eXit'].map(o => `<li role="none"><button type="button" role="menuitemradio" aria-checked="${o === 'ARea'}">${o}</button></li>`).join('')}</ul>`);

define('drawing-area', `<style>${RESET}
  :host { display: block; position: relative; background: #fff; box-sizing: border-box; min-height: 0; z-index: 1; }
  .sheet { position: absolute; left: 0; top: 0; width: 100%; height: 100%; }
  .edge { position: absolute; right: 0; top: 0; bottom: 0; width: 6px; box-sizing: border-box; border-right: 2px solid #1f6f8b; background: linear-gradient(#b7d8ec 72px, #e6eff4 72px); }
  .win { position: absolute; right: 13px; top: 6px; display: flex; gap: 4px; }
  nav-bar { position: absolute; right: 8px; top: 20px; }
  dynamic-input { position: absolute; left: 270px; top: 369px; }
  .sheet text { font-family: "Liberation Sans", Arial, sans-serif; font-size: 14px; }
</style>
<svg class="sheet" role="img" aria-label="Contour drawing">
  <svg x="60" y="54" width="540" height="360" viewBox="0 0 1620 1080" fill="none" stroke-width="1" shape-rendering="crispEdges">
    <path vector-effect="non-scaling-stroke" stroke="#5a4c48" d="M640 1006L593 1002L540 996L515 990H400L375 998L320 1000L300 996L250 974L230 960L190 910L165 880L140 825L115 755L92 708L85 640V488L105 455L130 410L162 382L195 374L230 373L275 355L320 308L375 257L410 238L460 213L520 175L538 158L542 145L552 134L590 120L635 98L655 95L680 86L740 73L785 68L805 64H1040L1085 78L1130 98L1205 121L1245 123L1340 145L1400 174L1440 190L1465 210L1475 265L1498 325V445L1480 475L1460 495L1440 508L1430 520V618L1410 665L1395 715L1370 765L1330 805L1280 842L1235 867L1170 890L1100 926L1055 945"/>
    <path vector-effect="non-scaling-stroke" stroke="#3f5c30" fill="#c3fec3" d="M357 915H515L545 908L690 905L740 896L800 876L970 847L1040 841L1095 836L1110 827L1160 820L1185 803L1220 765L1250 728L1280 693L1305 670L1335 655L1340 640L1358 625L1360 610V540L1353 505L1350 460L1342 430L1320 385L1318 372L1305 355L1280 320L1265 302L1220 283L1170 278L1140 264L1095 254L1072 247H845L820 255L780 258L740 266L690 287L655 292L590 313L550 323L520 334L470 358L430 374L410 377L370 400L335 422L300 452L252 486L222 518L220 550L205 588L182 625L181 680L192 715L207 765L240 820L265 848L310 880L340 903z"/>
    <path vector-effect="non-scaling-stroke" stroke="#3f7a32" d="M452 506L448 580L438 610V645L450 670L468 685H520L600 697L660 710L725 738L780 752L870 759L940 760L990 743L1080 712L1130 680L1180 640L1210 605L1230 570L1238 530V455L1230 430L1222 405L1210 393L1180 389L1120 383L1050 365L1000 352H940L840 360L790 366L750 375L700 392L655 397L610 408L560 440L520 463L480 487z"/>
    <path vector-effect="non-scaling-stroke" stroke="#3f7a32" d="M780 542L810 522L860 510L900 508L930 514L962 516L967 540L965 560L950 580L925 595L845 598L810 588L782 584L776 572z"/>
  </svg>
  <g fill="#2f6a2b"><text x="333" y="238">108,50</text><text x="339" y="266">105</text><text x="333" y="302">100</text></g>
  <g fill="#3c3c3c"><text x="332" y="356">95</text><text x="341" y="406">90</text>
  <text x="687" y="70">Equidistância Vertical = 5 m.</text><text x="688" y="87">A1 (95) =</text><text x="688" y="103">A2(100) =</text><text x="688" y="120">A3(105) =</text></g>
  <path d="M257 325h1v62h-1zM226 356h64v1h-64z" fill="#7f8d7f"/>
  <g style="paint-order:stroke" fill="#fff" stroke="#222" stroke-width="2"><text x="261" y="351" style="font-size:10px;font-weight:bold">?</text></g>
  <g stroke="#555" fill="none" shape-rendering="crispEdges"><path d="M12 424V464M16 464H52M9 460H16V467H9z"/></g>
  <g fill="#888"><text x="14" y="420">Y</text><text x="56" y="463">X</text></g>
</svg>
<div class="edge"></div>
<div class="win"><button type="button" aria-label="Minimize"><cad-icon name="winmin"></cad-icon></button><button type="button" aria-label="Restore"><cad-icon name="winmax"></cad-icon></button><button type="button" aria-label="Close"><cad-icon name="winclose"></cad-icon></button></div>
<nav-bar></nav-bar>
<dynamic-input></dynamic-input>`);

define('command-line', `<style>${RESET}
  :host { display: grid; grid-template-columns: 20px minmax(0, 1fr); height: 49px; box-sizing: border-box; border-top: 2px solid #2a303a; background: #2f3743; color: #26282b; font-family: "DejaVu Sans Mono", monospace; }
  .side { display: flex; flex-direction: column; align-items: center; padding: 2px 0 3px; width: 18px; }
  .side button:last-child { margin-top: auto; }
  .history { height: 31px; box-sizing: border-box; padding: 5px 2px 0; background: #c8c8c8; border-bottom: 1px solid #9a9a9a; position: relative; white-space: pre; margin: 0; font: inherit; line-height: 12px; }
  .ibeam { position: absolute; left: 113px; top: 12px; }
  .prompt { display: flex; align-items: center; height: 16px; background: #fff; padding-left: 4px; white-space: pre; }
  .arrow { margin: 0 5px 0 3px; }
  .prompt b { margin-right: 6px; }
  label { margin-right: 3px; }
  .key { background: #d4d4d4; border-radius: 3px; height: 13px; line-height: 13px; padding: 0 1px; margin-right: 4px; }
  .key i { font-style: normal; color: #2a22d6; }
  .key:last-of-type { margin-right: 1px; }
  input { flex: 1; min-width: 0; outline: 0; }
</style>
<div class="side"><cad-icon name="grip"></cad-icon><button type="button" aria-label="Close command line"><cad-icon name="cross"></cad-icon></button><button type="button" aria-label="Customize"><cad-icon name="wrench"></cad-icon></button></div>
<div>
  <pre class="history">Select objects:
Area = 679.606, Length = 105.266<svg class="ibeam" width="8" height="14" aria-hidden="true"><path d="M1 1H3L4 2L5 1H7M4 2V12M1 13H3L4 12L5 13H7" fill="none" stroke="#777"/></svg></pre>
  <div class="prompt"><cad-icon name="ruler"></cad-icon><cad-icon class="arrow" name="downdark"></cad-icon><b>MEASUREGEOM</b><label for="cmd">Enter an option [</label><button type="button" class="key"><i>D</i>istance</button><button type="button" class="key"><i>Ra</i>dius</button><button type="button" class="key"><i>A</i>ngle</button><button type="button" class="key"><i>AR</i>ea</button><button type="button" class="key"><i>V</i>olume</button><button type="button" class="key"><i>Q</i>uick</button><button type="button" class="key"><i>M</i>ode</button><button type="button" class="key">e<i>X</i>it</button><span>] &lt;ARea&gt;:</span><input id="cmd" type="text" autocomplete="off"></div>
</div>`);

define('status-bar', `<style>${RESET}
  :host { display: flex; justify-content: space-between; height: 26px; box-sizing: border-box; background: #222932; border-bottom: 2px solid #5f95b3; color: #c9cdd2; }
  nav { display: flex; padding-left: 10px; }
  nav a, nav button { height: 16px; line-height: 15px; box-sizing: border-box; background: #2c343f; clip-path: polygon(0 0, 100% 0, calc(100% - 5px) 100%, 5px 100%); text-align: center; width: 49px; margin-right: 3px; }
  nav a[aria-current] { background: #3b4453; color: #fff; font-weight: 700; width: 44px; }
  nav button { width: 20px; display: grid; place-items: center; }
  .tools { display: flex; gap: 2px; padding: 2px 2px 2px 0; }
  .group { display: flex; align-items: center; gap: 4px; background: #3b4453; padding: 0 2px; height: 19px; }
  .group button { display: block; }
  .mode { padding: 0 3px; font-weight: 600; }
  .on { background: #5f93c6; padding: 0 1px; }
</style>
<nav aria-label="Layouts"><a href="#" aria-current="page">Model</a><a href="#">Layout1</a><a href="#">Layout2</a><button type="button" aria-label="New layout"><cad-icon name="plus"></cad-icon></button></nav>
<div class="tools">
  <div class="group mode"><button type="button">MODEL</button></div>
  ${[['grid', 'snap', 'down'], ['ortho', 'polar', 'down', 'iso', 'down'], ['otrack', 'osnap', 'down'], ['annovis'], ['gear', 'down'], ['units'], ['perf'], ['clean', 'custom']].map(g => `<div class="group${g[0] === 'annovis' ? ' on' : ''}">${g.map(n => `<button type="button" aria-label="${n}"><cad-icon name="${n}"></cad-icon></button>`).join('')}</div>`).join('')}
</div>`);

define('cad-app', `<style>
  :host { display: grid; grid-template-rows: auto auto auto minmax(0, 1fr) auto auto; height: 100vh; box-sizing: border-box; padding: 21px 0 22px; background: #000; }
</style>
<cad-header></cad-header>
<cad-ribbon></cad-ribbon>
<file-tabs></file-tabs>
<drawing-area></drawing-area>
<command-line></command-line>
<status-bar></status-bar>`);
</script>
</body>
</html>
